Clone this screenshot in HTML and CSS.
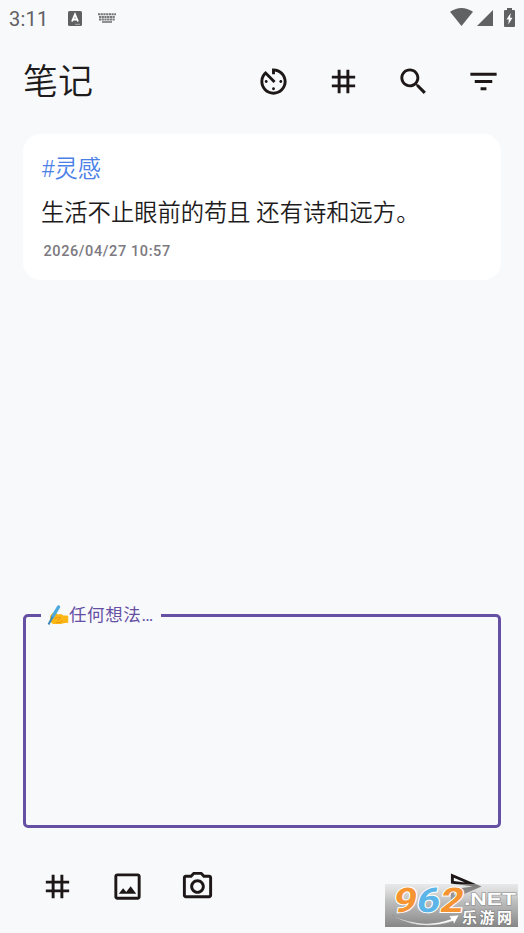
FILE: index.html
```html
<!DOCTYPE html>
<html lang="zh-CN">
<head>
<meta charset="utf-8">
<title>笔记</title>
<link rel="stylesheet" href="styles.css">
</head>
<body>
<div class="app">
  <header class="status">
    <span class="clock">3:11</span>
    <svg class="st-a" viewBox="0 0 14 15"><rect width="14" height="15" rx="1.5" fill="#5f6061"/><path d="M4 10.500 7 3.500l3 7M5.200 8.500h3.600" fill="none" stroke="#fff" stroke-width="1.900"/><path d="M7 13.300h5" stroke="#bbb" stroke-width=".8"/></svg>
    <svg class="st-k" viewBox="0 0 18 10"><path d="M0 1.200h18M1 4h16M1 6.600h16" stroke="#77787a" stroke-width="2" stroke-dasharray="2.200 .5"/><path d="M4 9h10" stroke="#77787a" stroke-width="1.600"/></svg>
    <span class="spacer"></span>
    <svg class="st-w" viewBox="0 0 23 18"><path d="M0 3.800Q11.500-3.800 23 3.800L11.500 18z" fill="#606162"/></svg>
    <svg class="st-s" viewBox="0 0 16 16"><path d="M16 0v16H0z" fill="#606162"/></svg>
    <svg class="st-b" viewBox="0 0 11 19"><path d="M3 0h5v2h2a1 1 0 0 1 1 1v15a1 1 0 0 1-1 1H1a1 1 0 0 1-1-1V3a1 1 0 0 1 1-1h2z" fill="#606162"/><path d="M6.700 5 2.500 11.500h2.300L4.300 16.500 8.500 9.800H6.100z" fill="#fff"/></svg>
  </header>

  <div class="topbar">
    <h1>笔记</h1>
    <nav class="actions">
      <svg class="icon" viewBox="0 0 24 24"><path d="M11 17c0 .55.45 1 1 1s1-.45 1-1-.45-1-1-1-1 .45-1 1zm0-14v4h2V5.080c3.390.49 6 3.390 6 6.920 0 3.870-3.130 7-7 7s-7-3.130-7-7c0-1.680.59-3.220 1.580-4.420L12 13l1.410-1.410-6.800-6.800v.02C4.420 6.450 3 9.050 3 12c0 4.970 4.020 9 9 9 4.970 0 9-4.030 9-9s-4.030-9-9-9h-1zm7 9c0-.55-.45-1-1-1s-1 .45-1 1 .45 1 1 1 1-.45 1-1zM6 12c0 .55.45 1 1 1s1-.45 1-1-.45-1-1-1-1 .45-1 1z"/></svg>
      <svg class="icon" viewBox="0 0 24 24"><path d="M20 10V8h-4V4h-2v4h-4V4H8v4H4v2h4v4H4v2h4v4h2v-4h4v4h2v-4h4v-2h-4v-4h4zm-6 4h-4v-4h4v4z"/></svg>
      <svg class="icon" viewBox="0 0 24 24"><path d="M15.500 14h-.79l-.28-.27C15.410 12.590 16 11.110 16 9.500 16 5.910 13.090 3 9.500 3S3 5.910 3 9.500 5.910 16 9.500 16c1.610 0 3.090-.59 4.230-1.570l.27.28v.79l5 4.990L20.490 19l-4.990-5zm-6 0C7.010 14 5 11.990 5 9.500S7.010 5 9.500 5 14 7.010 14 9.500 11.990 14 9.500 14z"/></svg>
      <svg class="icon" viewBox="0 0 24 24"><path d="M10 18h4v-2h-4v2zM3 6v2h18V6H3zm3 7h12v-2H6v2z"/></svg>
    </nav>
  </div>

  <main class="notes">
    <article class="note">
      <div class="tag">#灵感</div>
      <p class="body">生活不止眼前的苟且 还有诗和远方。</p>
      <time class="date">2026/04/27 10:57</time>
    </article>
  </main>

  <fieldset class="editor">
    <legend><svg class="hand" viewBox="0 0 22 22" role="img" aria-label="✍️"><path d="M3 12.500Q5 8 8.500 8.500L11 10.500 14 10l2.500 1.500H20q1.200 0 1.200 1V18q0 1-1.200 1h-2.500L14 20H6L3.500 18z" fill="#fcb716"/><path d="m8 14.500 4-1.500 2 1-4 2.500M9 18.500h4l3-2" fill="none" stroke="#e69312" stroke-width=".8"/><path d="M11.500 3 5.500 13" stroke="#4ba9df" stroke-width="3.400" stroke-linecap="round"/><path d="M5.500 13 1.500 20.500" stroke="#3989ba" stroke-width="2"/></svg><span>任何想法…</span></legend>
  </fieldset>

  <footer class="tools">
    <svg class="icon" viewBox="0 0 24 24"><path d="M20 10V8h-4V4h-2v4h-4V4H8v4H4v2h4v4H4v2h4v4h2v-4h4v4h2v-4h4v-2h-4v-4h4zm-6 4h-4v-4h4v4z"/></svg>
    <svg class="icon" viewBox="0 0 24 24"><path d="M19 5v14H5V5h14m0-2H5c-1.100 0-2 .9-2 2v14c0 1.100.9 2 2 2h14c1.100 0 2-.9 2-2V5c0-1.100-.9-2-2-2zm-4.860 8.860-3 3.870L9 13.140 6 17h12l-3.860-5.140z"/></svg>
    <svg class="icon" viewBox="0 0 24 24"><path d="M14.120 4l1.830 2H20v12H4V6h4.050l1.830-2h4.240M15 2H9L7.170 4H4c-1.100 0-2 .9-2 2v12c0 1.100.9 2 2 2h16c1.100 0 2-.9 2-2V6c0-1.100-.9-2-2-2h-3.170L15 2zm-3 5c-2.760 0-5 2.240-5 5s2.240 5 5 5 5-2.240 5-5-2.240-5-5-5zm0 8c-1.650 0-3-1.350-3-3s1.350-3 3-3 3 1.350 3 3-1.350 3-3 3z"/></svg>
    <span class="spacer"></span>
    <svg class="icon send" viewBox="0 0 24 24"><path d="M4.010 6.030l7.510 3.220-7.520-1 .01-2.220m7.500 8.720L4 17.970v-2.220l7.510-1M2.010 3L2 10l15 2-15 2 .01 7L23 12 2.010 3z"/></svg>
  </footer>

  <svg class="watermark" viewBox="0 0 133 43">
    <defs><linearGradient id="wm" x2="0" y2="1"><stop offset="0" stop-color="#d8d8d8" stop-opacity=".5"/><stop offset=".4" stop-color="#b4b4b4" stop-opacity=".85"/><stop offset="1" stop-color="#858585"/></linearGradient></defs>
    <rect width="133" height="43" fill="url(#wm)"/>
    <path d="M7 31Q37 46 66 35L64 32 74 31 69 40 68 37Q35 48 7 31z" fill="#fff" stroke="#888" stroke-width=".4"/>
    <g transform="translate(7 27.500) skewX(-10)"><text class="wm-num" textLength="70" lengthAdjust="spacingAndGlyphs"><tspan fill="#f79432">9</tspan><tspan fill="#5cb5e8">6</tspan><tspan fill="#f79432">2</tspan></text></g>
    <text class="wm-net" x="79" y="20.500" textLength="52" lengthAdjust="spacingAndGlyphs">.NET</text>
    <text class="wm-cn" x="77" y="38.500" textLength="50">乐游网</text>
  </svg>
</div>
</body>
</html>
```
FILE: styles.css
```css
* { box-sizing: border-box; }
body { margin: 0; }
.app {
  position: relative;
  width: 524px;
  height: 933px;
  overflow: hidden;
  display: flex;
  flex-direction: column;
  background: #f8f9fb;
  color: #1d1b1b;
  font-family: Roboto, "Noto Sans CJK SC", sans-serif;
}
svg { display: block; flex: none; }
.spacer { flex: 1; }
.status {
  height: 36px;
  display: flex;
  align-items: center;
  padding: 0 9px;
}
.clock { width: 59px; padding-top: 1px; font-size: 20px; letter-spacing: .2px; color: #606162; }
.st-a { width: 14px; height: 15px; }
.st-k { width: 18px; height: 10px; margin-left: 16px; }
.st-w { width: 23px; height: 18px; margin-top: -2px; }
.st-s { width: 16px; height: 16px; margin: -1px 11px 0 4px; }
.st-b { width: 11px; height: 19px; margin-top: -2px; }
.topbar {
  height: 90px;
  display: flex;
  align-items: center;
  justify-content: space-between;
  padding: 0 23px;
}
h1 { margin: 3px 0 0; font-size: 35px; line-height: 44px; font-weight: 350; }
.actions { display: flex; gap: 35px; }
.icon { width: 35px; height: 35px; fill: #1d1817; }
.notes { height: 487px; padding: 8px 23px 0; }
.note {
  height: 146px;
  padding: 18px 18px 0;
  border-radius: 18px;
  background: #fff;
}
.tag { font-size: 23.300px; line-height: 34px; color: #4a80e8; font-weight: 350; }
.body { margin: 10px 0 0; font-size: 23.300px; line-height: 35px; white-space: nowrap; font-weight: 350; }
.date { display: block; margin: 11px 0 0 2.500px; font-size: 14.500px; line-height: 20px; letter-spacing: .6px; font-weight: 500; color: #7c797f; }
.editor {
  height: 225px;
  margin: -10px 23px 0;
  padding: 0 15px;
  border: 3px solid #6650a4;
  border-radius: 5px;
}
legend {
  display: flex;
  align-items: center;
  width: 120px;
  height: 24px;
  padding: 0 6px;
  color: #6650a4;
  font-size: 17.500px;
  line-height: 24px;
  letter-spacing: .6px;
  white-space: nowrap;
}
.hand { width: 22px; height: 22px; }
.tools {
  display: flex;
  align-items: center;
  gap: 35px;
  padding: 41px 41px 0 40px;
}
.watermark { position: absolute; left: 385px; top: 884px; width: 133px; height: 43px; }
.wm-num { font: bold 34px Roboto, sans-serif; stroke: #fff; stroke-width: 2px; paint-order: stroke; }
.wm-net { font: bold 17px "Liberation Sans", sans-serif; fill: #fff; stroke: #888; stroke-width: 1px; paint-order: stroke; }
.wm-cn { font: bold 15px "Noto Sans CJK SC", sans-serif; fill: #fff; stroke: #777; stroke-width: 1px; paint-order: stroke; }
```
